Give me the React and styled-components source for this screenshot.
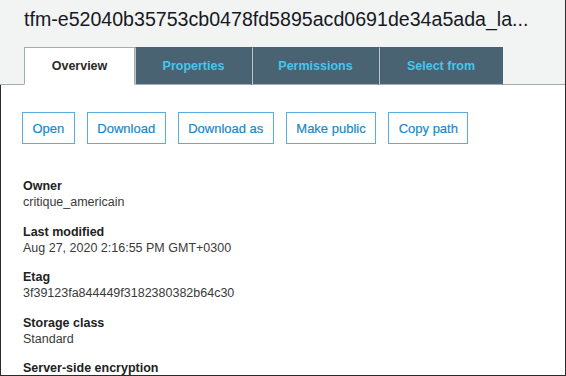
import React from 'react';
import styled, { createGlobalStyle } from 'styled-components';

const GlobalStyle = createGlobalStyle`
	html, body {
		margin: 0;
		padding: 0;
		background: #ffffff;
	}
	body {
		font-family: "Liberation Sans", Arial, Helvetica, sans-serif;
	}
`;

const Frame = styled.div`
	width: 566px;
	height: 376px;
	box-sizing: border-box;
	border-right: 1px solid #2b2b2b;
	border-bottom: 1px solid #2b2b2b;
	overflow: hidden;
	display: flex;
	flex-direction: column;
`;

const Header = styled.header`
	background: #f2f3f3;
	border-bottom: 1px solid #a2adb3;
	padding: 6px 0 0 24px;
	display: flex;
	flex-direction: column;
`;

const Title = styled.h1`
	margin: 0;
	font-size: 19.6px;
	font-weight: 400;
	color: #16191f;
	line-height: 26px;
	white-space: nowrap;
`;

const Tabs = styled.nav`
	display: flex;
	margin-top: 15px;
	margin-bottom: -1px;
`;

const Tab = styled.div`
	height: 38px;
	box-sizing: border-box;
	width: ${p => p.$w}px;
	display: flex;
	align-items: center;
	justify-content: center;
	font-size: 12.5px;
	font-weight: 700;
	background: ${p => (p.$active ? '#ffffff' : '#4a6372')};
	color: ${p => (p.$active ? '#2a2a2a' : '#45c6ec')};
	border: 1px solid ${p => (p.$active ? '#a2adb3' : '#4a6372')};
	border-bottom-color: ${p => (p.$active ? '#ffffff' : '#a2adb3')};
	border-left-color: ${p => (p.$active ? '#a2adb3' : '#bac6cd')};
`;

const Body = styled.main`
	flex: 1;
	border-left: 1px solid #2b2b2b;
	padding: 27px 0 0 21px;
`;

const Actions = styled.div`
	display: flex;
	gap: 12px;
`;

const Button = styled.button`
	height: 32px;
	padding: 0 9.5px;
	background: #ffffff;
	border: 1px solid #58aee0;
	border-radius: 0;
	color: #1b87c9;
	font-family: inherit;
	font-size: 13px;
	font-weight: 400;
	-webkit-text-stroke: 0.2px #1b87c9;
	cursor: pointer;
`;

const Details = styled.dl`
	margin: 34px 0 0 1px;
	display: flex;
	flex-direction: column;
	gap: 13.5px;
`;

const Item = styled.div`
	display: flex;
	flex-direction: column;
`;

const Label = styled.dt`
	font-size: 12.5px;
	font-weight: 700;
	color: #222222;
	line-height: 16px;
`;

const Value = styled.dd`
	margin: 0;
	font-size: 12.5px;
	color: #3a3a3a;
	line-height: 16px;
`;

const tabs = [
	{ name: 'Overview', w: 111, active: true },
	{ name: 'Properties', w: 117 },
	{ name: 'Permissions', w: 127 },
	{ name: 'Select from', w: 124 },
];

const actions = ['Open', 'Download', 'Download as', 'Make public', 'Copy path'];

const details = [
	['Owner', 'critique_americain'],
	['Last modified', 'Aug 27, 2020 2:16:55 PM GMT+0300'],
	['Etag', '3f39123fa844449f3182380382b64c30'],
	['Storage class', 'Standard'],
	['Server-side encryption'],
];

export default function App() {
	return (
		<>
			<GlobalStyle />
			<Frame>
				<Header>
					<Title>tfm-e52040b35753cb0478fd5895acd0691de34a5ada_la...</Title>
					<Tabs>
						{tabs.map(t => (
							<Tab key={t.name} $w={t.w} $active={t.active}>
								{t.name}
							</Tab>
						))}
					</Tabs>
				</Header>
				<Body>
					<Actions>
						{actions.map(a => (
							<Button key={a}>{a}</Button>
						))}
					</Actions>
					<Details>
						{details.map(([k, v]) => (
							<Item key={k}>
								<Label>{k}</Label>
								{v && <Value>{v}</Value>}
							</Item>
						))}
					</Details>
				</Body>
			</Frame>
		</>
	);
}
